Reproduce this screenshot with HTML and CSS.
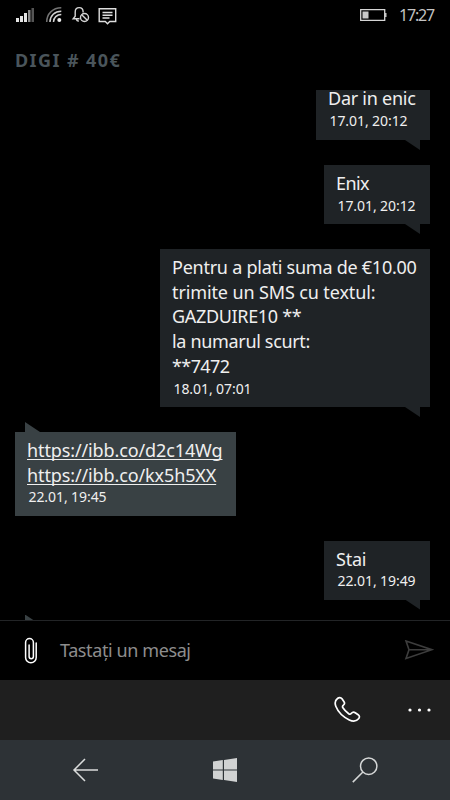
FILE: index.html
```html
<!DOCTYPE html>
<html lang="ro">
<head>
<meta charset="utf-8">
<title>DIGI # 40€</title>
<link rel="stylesheet" href="styles.css">
</head>
<body>
<div class="phone">
  <header class="status">
    <svg class="status-icons" width="120" height="30" viewBox="0 0 120 30" fill="none">
      <g fill="#e4e4e4"><path d="M16 18h3v4h-3zM20 16h3v6h-3zM24 13h3v9h-3z"/><path fill="#8c8c8c" d="M28 10h2.500v12h-2.500z"/><path fill="#555" d="M31.500 8h2.500v14h-2.500z"/></g>
      <g stroke="#d2d2d2" stroke-width="1.500"><path stroke="#737373" d="M46.700 22c0-8 6-14.300 14.600-14.300"/><path d="M50 22c0-6.200 4.800-10.800 11.300-10.800M53.500 22c0-4.400 3.400-7.500 7.800-7.500"/></g>
      <circle cx="59.300" cy="20" r="2" fill="#eee"/>
      <g stroke="#d6d6d6" stroke-width="1.400"><path d="M79.500 18.700h-6.300l2-2.500v-4.200c0-3 1.700-4.400 4-4.400s3.900 1.500 3.900 4.200v.7M76.500 19c0 1.500 1 2.100 2.400 1.900"/><circle cx="84.500" cy="17.500" r="4"/><path d="M81.700 14.700l5.600 5.600"/></g>
      <g stroke="#dedede" stroke-width="1.400"><path d="M99.200 8.700h16.500v12.800h-6l-2.200 2.200-2.200-2.200h-6.100z"/><path d="M102.500 12.500h10M102.500 15.300h10M102.500 18h7"/></g>
    </svg>
    <svg class="battery" width="28" height="14" viewBox="0 0 28 14" fill="none"><path d="M.7 1.700h24v10.600h-24z" stroke="#d5d5d5" stroke-width="1.300"/><path d="M2.500 3.500h6v7h-6zM25 5h1.500v4h-1.500z" fill="#c8c8c8"/></svg>
    <span class="clock">17:27</span>
  </header>
  <h1 class="title"><span>DIGI # 40€</span></h1>
  <main class="thread">
    <article class="msg out">
      <p class="snug">Dar in enic</p><time>17.01, 20:12</time>
    </article>
    <article class="msg out narrow">
      <p class="tight">Enix</p><time>17.01, 20:12</time>
    </article>
    <article class="msg out wide">
      <p class="snug">Pentru a plati suma de €10.00</p>
      <p class="near">trimite un SMS cu textul:</p>
      <p class="close">GAZDUIRE10 **</p>
      <p class="close">la numarul scurt:</p>
      <p class="tight">**7472</p>
      <time>18.01, 07:01</time>
    </article>
    <article class="msg in">
      <p class="near"><a>https://ibb.co/d2c14Wg</a></p>
      <p class="near"><a>https://ibb.co/kx5h5XX</a></p>
      <time>22.01, 19:45</time>
    </article>
    <article class="msg out narrow">
      <p class="snug">Stai</p><time>22.01, 19:49</time>
    </article>
    <article class="msg in"></article>
  </main>
  <div class="compose">
    <svg class="clip" width="14" height="28" viewBox="0 0 14 28" fill="none" stroke="#fff" stroke-width="1.500" stroke-linecap="round"><path d="M12.200 6v14.500a5.300 5.300 0 0 1-10.600 0V5.500a3.500 3.500 0 0 1 7.800 0V19.500a2.100 2.100 0 0 1-4.300 0V8"/></svg>
    <span class="placeholder">Tastați un mesaj</span>
    <svg class="send" width="30" height="20" viewBox="0 0 30 20" fill="none" stroke="#3d3d3d" stroke-width="1.600"><path d="M2 1l26 8.700L2 18.500l3-8.800zM5 9.700h22"/></svg>
  </div>
  <div class="actions">
    <svg class="call" width="28" height="28" viewBox="0 0 28 28" fill="none" stroke="#fff" stroke-width="1.700" stroke-linejoin="round"><path d="M3.500 2.500C5 1.200 6.800 1.200 8 2.800l2 2.900c.9 1.400.5 2.600-.6 3.500-1.100.9-1.300 1.400-.5 2.600 1.400 2.200 3.500 4.300 5.800 6 1.200.8 1.800.6 2.700-.5 1.200-1.400 2.400-1.600 3.800-.6l3 2.100c1.500 1.100 1.600 2.500.4 3.900-2.200 2.600-5.500 3.100-9.300 1.200C9 20.800 4 15.700 1.800 10.200.6 7 1 4.400 3.500 2.500z"/></svg>
    <svg width="24" height="4" viewBox="0 0 24 4" fill="#fff"><circle cx="2" cy="2" r="1.600"/><circle cx="11.500" cy="2" r="1.600"/><circle cx="21" cy="2" r="1.600"/></svg>
  </div>
  <nav class="nav">
    <svg width="26" height="24" viewBox="0 0 26 24" fill="none" stroke="#dadcdc" stroke-width="1.500"><path d="M26 12H2M13 1L2 12l11 11"/></svg>
    <svg width="24" height="24" viewBox="0 0 24 24" fill="#d0d2d2"><path d="M0 3.500l9.800-1.400v9.300H0zM11 2L24 0v11.400H11zM0 12.600h9.800v9.300L0 20.500zM11 12.600h13V24l-13-2z"/></svg>
    <svg width="26" height="26" viewBox="0 0 26 26" fill="none" stroke="#d5d7d7" stroke-width="1.500"><circle cx="16.700" cy="9.200" r="8.200"/><path d="M10.900 15L.8 25.100"/></svg>
  </nav>
</div>
</body>
</html>
```
FILE: styles.css
```css
* { box-sizing: border-box; }
body { margin: 0; background: #000; }
.phone {
  width: 450px; height: 800px; display: flex; flex-direction: column; overflow: hidden;
  background: #000; color: #efefef; font-family: "Noto Sans", "Open Sans", sans-serif;
}
svg { display: block; flex: none; }
.status { height: 30px; display: flex; align-items: center; flex: none; }
.battery { margin-left: 240px; }
.clock { margin-left: 11px; font-size: 16px; letter-spacing: -1.2px; color: #c4c4c4; line-height: 30px; }
.title {
  margin: 0; height: 60px; flex: none; padding: 17px 15px 0;
  font-size: 18px; line-height: 26px; font-weight: 700; letter-spacing: 1.4px; color: #4a555b;
}
.thread {
  height: 530px; flex: none; overflow: hidden; display: flex; flex-direction: column;
  gap: 25px; padding: 0 20px 0 15px;
}
.msg { position: relative; flex: none; padding: 6px 12px 7px; min-height: 59px; }
.msg p { margin: 0; font-size: 18px; line-height: 24.7px; white-space: nowrap; }
.msg .near { letter-spacing: -0.12px; }
.msg .snug { letter-spacing: -0.25px; }
.msg .close { letter-spacing: -0.33px; }
.msg .tight { letter-spacing: -0.6px; }
.msg time { display: block; margin-left: 1.5px; font-size: 14px; line-height: 20px; letter-spacing: -0.08px; white-space: nowrap; }
.msg::after { content: ""; position: absolute; width: 15px; height: 10px; background: inherit; }
.out { align-self: flex-end; background: #1f2326; width: 114px; }
.out:first-child { margin-top: -9px; }
.out:first-child p { line-height: 23.7px; padding-top: 0; }
.out::after { right: 10px; top: 100%; clip-path: polygon(0 0, 100% 0, 100% 100%); }
.narrow { width: 106px; }
.wide { width: 270px; height: 158px; }
.in { align-self: flex-start; background: #394144; width: 221px; height: 83.5px; }
.in::after { left: 10px; bottom: 100%; clip-path: polygon(0 0, 100% 100%, 0 100%); }
.in a { text-decoration: underline; text-decoration-thickness: 1px; text-underline-offset: 2px; text-decoration-skip-ink: none; }
.compose { height: 60px; flex: none; display: flex; align-items: center; border-top: 1px solid #222426; }
.clip { margin-left: 24px; }
.placeholder { margin: 0 0 2px 22px; font-size: 18px; letter-spacing: -0.4px; color: #8d8d8d; }
.send { margin: 0 16px 2px auto; }
.actions { height: 60px; flex: none; display: flex; align-items: center; background: #1f1f1f; padding: 0 18px 0 334px; justify-content: space-between; }
.nav { height: 60px; flex: none; display: flex; align-items: center; justify-content: space-between; background: #2d3236; padding: 0 72px; }
```
